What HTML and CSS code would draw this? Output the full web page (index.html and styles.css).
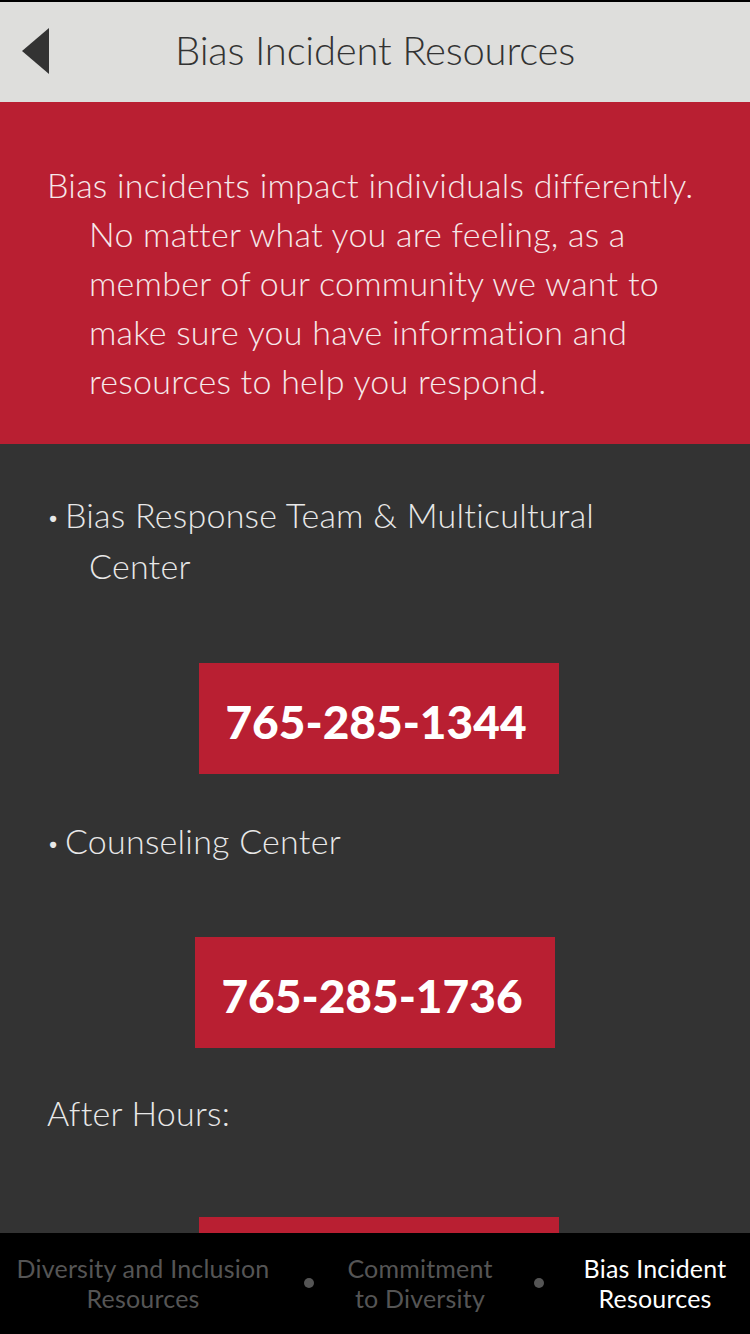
FILE: index.html
```html
<!DOCTYPE html>
<html lang="en">
<head>
<meta charset="utf-8">
<title>Bias Incident Resources</title>
<link rel="stylesheet" href="styles.css">
</head>
<body>
<div class="app">
  <header class="topbar">
    <button class="back" aria-label="Back">
      <svg width="28" height="46" viewBox="0 0 28 46"><polygon points="27,0 27,46 0,23" fill="#333333"/></svg>
    </button>
    <h1 class="title">Bias Incident Resources</h1>
  </header>
  <main class="content">
    <section class="intro">
      <p class="hang">Bias incidents impact individuals differently. No matter what you are feeling, as a member of our community we want to make sure you have information and resources to help you respond.</p>
    </section>
    <section class="list">
      <p class="hang item"><span class="bullet">• </span>Bias Response Team &amp; Multicultural Center</p>
      <a class="phone first" href="#">765-285-1344</a>
      <p class="hang item"><span class="bullet">• </span>Counseling Center</p>
      <a class="phone second" href="#">765-285-1736</a>
      <p class="hang item">After Hours:</p>
      <a class="phone third" href="#" aria-label="After hours phone"></a>
    </section>
  </main>
  <nav class="tabs">
    <span class="tab">Diversity and Inclusion<br>Resources</span>
    <span class="dot"></span>
    <span class="tab">Commitment<br>to Diversity</span>
    <span class="dot"></span>
    <span class="tab active">Bias Incident<br>Resources</span>
  </nav>
</div>
</body>
</html>
```
FILE: styles.css
```css
* { box-sizing: border-box; }
html, body { margin: 0; padding: 0; }
body {
  width: 750px;
  height: 1334px;
  overflow: hidden;
  background: #333333;
  font-family: "Lato", "Liberation Sans", sans-serif;
}
.app {
  display: flex;
  flex-direction: column;
  height: 1334px;
}
.topbar {
  flex: none;
  height: 102px;
  border-top: 2px solid #000;
  background: #dededc;
  display: flex;
  align-items: center;
}
.back {
  border: 0;
  background: none;
  padding: 0;
  margin-left: 22px;
  display: flex;
  margin-top: -2px;
}
.title {
  flex: 1;
  margin: -4px 0 0 -50px;
  text-align: center;
  font-weight: 300;
  font-size: 40px;
  color: #333333;
  letter-spacing: -0.2px;
}
.content {
  flex: 1;
  overflow: hidden;
}
.intro {
  background: #b91f32;
  padding: 58px 47px 39px 0;
}
.hang {
  margin: 0;
  padding-left: 89px;
  text-indent: -42px;
  font-weight: 300;
  font-size: 34px;
  letter-spacing: 0.25px;
  line-height: 49px;
}
.intro .hang { color: #f6e8ea; }
.list {
  padding: 46px 47px 0 0;
  display: flex;
  flex-direction: column;
}
.item { color: #e8e8e8; }
.bullet {
  font-size: 21px;
  letter-spacing: 0;
  vertical-align: 3px;
}
.phone {
  align-self: flex-start;
  width: 360px;
  height: 111px;
  background: #b91f32;
  color: #ffffff;
  text-decoration: none;
  font-weight: 900;
  font-size: 46px;
  display: flex;
  align-items: center;
  justify-content: center;
  padding: 6px 6px 0 0;
}
.phone.first { margin-top: 73px; margin-bottom: 42px; margin-left: 199px; }
.phone.second { margin-top: 70px; margin-bottom: 40px; margin-left: 195px; }
.phone.third { margin-top: 80px; margin-left: 199px; }
.tabs {
  flex: none;
  height: 101px;
  background: #000000;
  display: grid;
  grid-template-columns: 286px 46px 176px 62px 170px;
  align-items: center;
  padding-bottom: 2px;
}
.tab {
  text-align: center;
  font-size: 25px;
  line-height: 30px;
  letter-spacing: 0.2px;
  font-weight: 400;
  color: #555555;
}
.tab.active { color: #ffffff; }
.dot {
  justify-self: center;
  width: 10px;
  height: 10px;
  border-radius: 50%;
  background: #555555;
}
```
